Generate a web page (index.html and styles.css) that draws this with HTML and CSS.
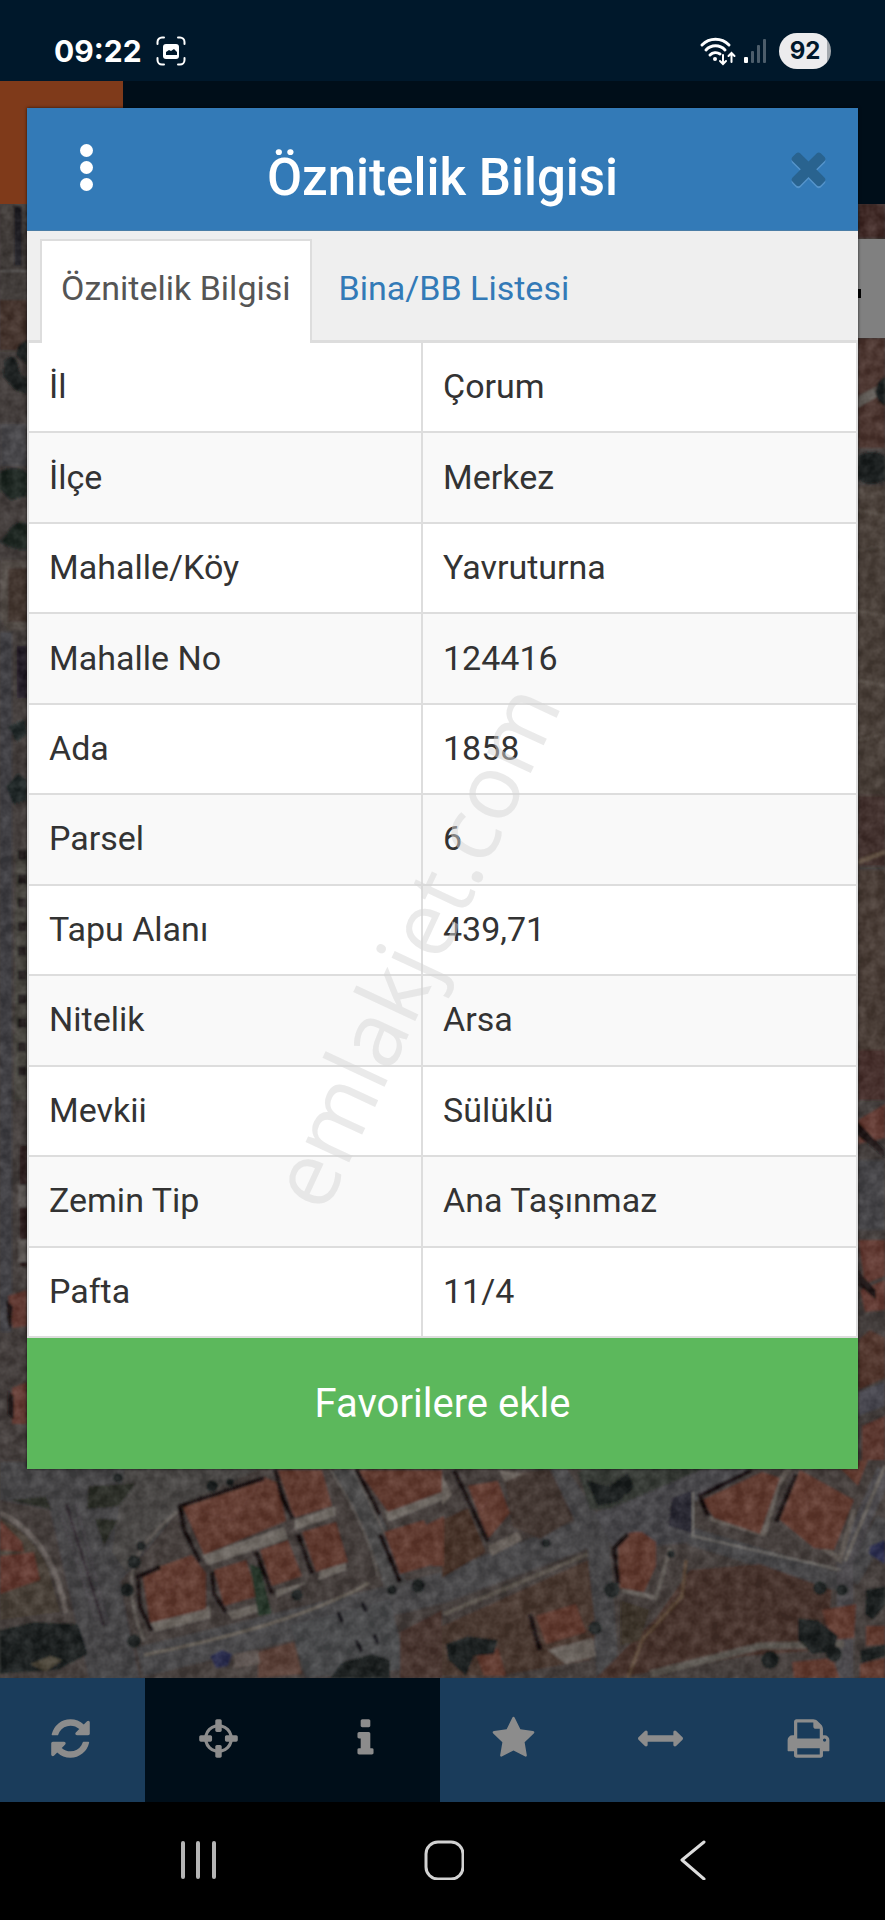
FILE: index.html
```html
<!DOCTYPE html>
<html lang="tr">
<head>
  <meta charset="UTF-8">
  <meta name="viewport" content="width=device-width, initial-scale=1">
  <title>Öznitelik Bilgisi</title>
  <link rel="stylesheet" href="styles.css">
</head>
<body>

<div class="status-bar">
  <div class="status-left">
    <span class="clock">09:22</span>
    <svg class="capture-icon" viewBox="0 0 30 30" fill="none" stroke="#fff" stroke-width="2" stroke-linecap="round">
      <path d="M1.500 8V6a4.500 4.500 0 0 1 4.500-4.500h2M22 1.500h2A4.500 4.500 0 0 1 28.500 6v2M28.500 22v2a4.500 4.500 0 0 1-4.500 4.500h-2M8 28.500H6A4.500 4.500 0 0 1 1.500 24v-2"/>
      <rect x="7" y="8" width="16" height="15" rx="3" fill="#fff" stroke="none"/>
      <path d="M10 19v-3l3-2 2 1 3-2 3 3v3z" fill="#00182b" stroke="none"/>
    </svg>
  </div>
  <div class="status-right">
    <svg class="wifi-icon" viewBox="0 0 38 30" fill="none" stroke="#fff" stroke-width="3" stroke-linecap="round">
      <path d="M4 9a19 19 0 0 1 27 0M8 14a13 13 0 0 1 19 0M12 19a8 8 0 0 1 10-1"/>
      <circle cx="17" cy="23" r="2" fill="#fff" stroke="none"/>
      <path d="M25 19v8M22 25l3 3 3-3M33.500 26v-8M30.500 20l3-3 3 3" stroke-width="2"/>
    </svg>
    <svg class="signal-icon" viewBox="0 0 23 25">
      <rect x="0" y="19" width="4" height="6" rx="1" fill="#fff"/>
      <rect x="7" y="13" width="3" height="12" rx="1" fill="#4c5d6b"/>
      <rect x="13" y="7" width="3" height="18" rx="1" fill="#4c5d6b"/>
      <rect x="19" y="1" width="3" height="24" rx="1" fill="#4c5d6b"/>
    </svg>
    <span class="battery">92</span>
  </div>
</div>

<main class="screen">
  <div class="app-header"><div class="app-logo"></div></div>

  <div class="map">
    <svg class="map-image" viewBox="0 204 885 1474" preserveAspectRatio="xMidYMax slice">
      <defs>
        <filter id="grain" x="0" y="0" width="100%" height="100%" color-interpolation-filters="sRGB">
          <feTurbulence type="fractalNoise" baseFrequency="0.09" numOctaves="3" seed="4"/>
          <feColorMatrix values="1 0 0 0 -0.24  1 0 0 0 -0.26  1 0 0 0 -0.26  0 0 0 0 0.2"/>
        </filter>
        <filter id="soft"><feGaussianBlur stdDeviation="1"/></filter>
      </defs>
      <rect x="0" y="204" width="885" height="1474" fill="#453f3d"/>
      <g filter="url(#soft)">
        <!-- left edge -->
        <rect x="0" y="204" width="27" height="120" fill="#403b38"/>
        <rect x="14" y="206" width="8" height="60" fill="#15131b"/>
        <path d="M0 270h27v2H0z" fill="#666460"/>
        <rect x="0" y="300" width="27" height="50" fill="#453029"/>
        <path d="M4 362q10-12 14 4t9 10v18l-12-4-12-14zM27 340q-12 4-10 16l10 8z" fill="#161e1c"/>
        <rect x="0" y="424" width="27" height="42" fill="#4a4a4d"/>
        <path d="M0 472q14-8 27 0v24l-16 4-11-10zM6 536q8-18 21-12v26q-16 0-27-8z" fill="#14201f"/>
        <path d="M0 560h27v70H8q-8-8-8-18z" fill="#56504a"/>
        <rect x="8" y="568" width="19" height="54" fill="#413029"/>
        <rect x="17" y="646" width="10" height="52" fill="#1d1624"/>
        <rect x="0" y="632" width="12" height="700" fill="#3f3f45"/>
        <path d="M8 726l16-6 3 14-10 8zM6 786l12-12 9 6v20l-14 4z" fill="#1b2827"/>
        <path d="M16 850h11v250H14z" fill="#4c4a42"/>
        <path d="M22 850v240" stroke="#211f1d" stroke-width="9" stroke-dasharray="10 14"/>
        <path d="M20 1146h7v120h-7z" fill="#271517"/>
        <path d="M18 1185h9v22h-9zM18 1240h9v22h-9z" fill="#65605d"/>
        <path d="M8 1296l19-6v36l-14 2zM12 1388l15-6v42H12z" fill="#6b3b31"/>
        <path d="M6 1300l7 6-2 24-4-8zM8 1390l6 6v24l-6-6z" fill="#190f11"/>
        <!-- right edge -->
        <rect x="858" y="204" width="27" height="34" fill="#412521"/>
        <rect x="858" y="338" width="27" height="110" fill="#50342d"/>
        <path d="M858 396l27-14v10l-27 16z" fill="#68635d"/>
        <path d="M858 456q14-8 27 0v24q-14 8-27 0zM878 382l7-6v30q-8-4-10-14z" fill="#161b1b"/>
        <rect x="858" y="486" width="27" height="310" fill="#4c4138"/>
        <path d="M858 510l27 6M858 550l27-4M858 610l27 6M858 680l27 6M858 740l27-6" stroke="#5b5148" stroke-width="3"/>
        <rect x="858" y="796" width="27" height="70" fill="#432f29"/>
        <path d="M858 862l27-10" stroke="#6b5847" stroke-width="4"/>
        <rect x="858" y="870" width="27" height="180" fill="#4b3e35"/>
        <rect x="858" y="1050" width="27" height="50" fill="#4a2e29"/>
        <path d="M858 1120l27-16v34l-27 6zM858 1240h27v36l-20 8zM860 1290l25-10v30l-20 2z" fill="#6b3b31"/>
        <path d="M858 1122l27 28v8l-27-22zM858 1270l18 20v10l-18-16z" fill="#130d0e"/>
        <path d="M858 1160h27v70h-27z" fill="#47474b"/>
        <path d="M858 1340l12-10 15 8v40l-27 12z" fill="#54352c"/>
        <path d="M858 1392l27-10v24l-27 10z" fill="#484a52"/>
        <path d="M862 1426l23-10v44l-23 4z" fill="#63372d"/>

        <!-- ground and streets -->
        <rect x="0" y="1460" width="885" height="218" fill="#46403d"/>
        <path d="M0 1462h180l-10 60-50 60 20 100H90L50 1510 0 1500z" fill="#47464a"/>
        <path d="M126 1462h150l-90 40-60 70-14-20z" fill="#4b4946"/>
        <path d="M88 1486l48-3-18 24-31 2zM94 1518l24 2-14 26zM8 1500l38-4 6 14z" fill="#2b2d28"/>
        <path d="M66 1504l38 122" stroke="#302a30" stroke-width="3"/>
        <path d="M76 1504l32 120M60 1510l36 110" stroke="#58545a" stroke-width="1"/>
        <path d="M0 1513q52 24 66 100" fill="none" stroke="#6f6864" stroke-width="5"/>
        <path d="M0 1518q30 14 48 50l12 44-60 8z" fill="#4b4339"/>
        <path d="M0 1520l22 22 2 10-24-2zM0 1556l34-4 6 28-40 14z" fill="#68392e"/>
        <path d="M0 1630l34-8 44 2 10 30-30 16-58 4z" fill="#141f1e"/>
        <path d="M30 1664l20-8 12 4-16 12z" fill="#4d4639"/>
        <path d="M180 1510q-45 34-48 65t12 66" fill="none" stroke="#69645f" stroke-width="3"/>
        <path d="M140 1662l302-74 145-55 144-66" fill="none" stroke="#4b4b4e" stroke-width="30"/>
        <path d="M144 1655q150-30 225-72" fill="none" stroke="#716a60" stroke-width="3"/>
        <path d="M444 1614l144-60" fill="none" stroke="#665f56" stroke-width="4"/>
        <path d="M340 1466q40 60 56 122" fill="none" stroke="#4e4d4e" stroke-width="22"/>
        <path d="M328 1466q40 60 50 110M352 1466l34 70" fill="none" stroke="#68645f" stroke-width="2"/>
        <path d="M290 1625l100-26 16 70-100 9z" fill="#4c4d50"/>
        <path d="M552 1466l46 70 10 142" fill="none" stroke="#48484b" stroke-width="22"/>
        <path d="M594 1514l100-46h60l-60 34v40l-80 8z" fill="#4a484d"/>
        <path d="M690 1536l150 46M850 1580l35-60" stroke="#48484b" stroke-width="18"/>
        <path d="M885 1470l-40 92v116" fill="none" stroke="#515052" stroke-width="16"/>
        <path d="M885 1466l-40 95" stroke="#756f69" stroke-width="3"/>

        <!-- empty lots -->
        <path d="M504 1474l46-5 24 50-34 20-28-12z" fill="#453732"/>
        <path d="M442 1520l26-12 18 44-44 26z" fill="#493327"/>
        <path d="M442 1626l146-66 8 70-6 30-90 16h-58z" fill="#4c382f"/>
        <path d="M690 1570l70-6 72 26-6 60-80 6-130 22h-20l60-60z" fill="#493229"/>
        <path d="M686 1560l-4 36-40 44-14 38" fill="none" stroke="#67513d" stroke-width="3"/>
        <path d="M650 1674l110-28 84-2" fill="none" stroke="#615b54" stroke-width="7"/>
        <path d="M620 1600l30 10-10 30-20 6z" fill="#3b3328"/>
        <path d="M400 1632l42-22v68h-42z" fill="#4b352f"/>
        <path d="M258 1652l36-10 8 32-44 4z" fill="#614237"/>
        <path d="M234 1654l24-4 2 14-26 4z" fill="#6b605b"/>
        <path d="M594 1462l-16 10 12 38 20-1 110-47z" fill="#363a35"/>
        <path d="M692 1490l2 44-12-4-14-4 4-28z" fill="#252530"/>
        <path d="M693 1492v44l148 34" fill="none" stroke="#77746f" stroke-width="2"/>

        <!-- courtyards -->
        <path d="M202 1555l82-28 4 12-80 26zM295 1520l40-14v10l-40 14zM150 1622l60-16v12l-56 14zM385 1510l58-24v14l-55 22z" fill="#77716b"/>
        <path d="M228 1612l30-8v8l-26 8zM276 1590l32-8-32 16zM320 1570l26-8v8l-28 10z" fill="#77716b"/>
        <path d="M548 1650l44-12 4 18-30 8zM488 1546l30-14 4 8-30 16zM452 1495l-10 10v-30zM500 1470l24 4-20 8z" fill="#736c65"/>
        <path d="M710 1518l54 16 14-50 14-20M800 1530l40 30 14-50" fill="none" stroke="#6b645d" stroke-width="5"/>
        <path d="M622 1590l34 8 14-50" fill="none" stroke="#6b655f" stroke-width="4"/>

        <!-- roofs -->
        <g fill="#683a2f">
          <path d="M182 1505l82-28 14 6 8 38-82 34z"/>
          <path d="M278 1470h44l10 36-38 12z"/>
          <path d="M358 1470h84v22l-54 20z"/>
          <path d="M142 1573l50-18 14 18v36l-56 14z"/>
          <path d="M214 1570l32-10 12 36-34 10z"/>
          <path d="M260 1550l28-10 14 36-30 10z"/>
          <path d="M302 1532l34-10 12 40-32 10z"/>
          <path d="M384 1532l40-12 18 42-42 12z"/>
          <path d="M424 1526l20-10v50h-12z"/>
          <path d="M468 1486l30-5 12 32-22 26z"/>
          <path d="M618 1546q4-16 24-14l14 10v24l-12 26-24-4z"/>
          <path d="M702 1500l60-28 18 6-20 56-46-16z"/>
          <path d="M780 1520l20-50 54 30-20 50-20-2z"/>
          <path d="M536 1616l40-12 10 28-40 12z"/>
          <path d="M476 1654l22-6 8 28h-22z"/>
          <path d="M822 1610l34-6-2 34-22 2z"/>
          <path d="M866 1626h19v18l-19 2zM792 1662l40-4 8 20h-46zM860 1664l25-6v20h-25zM834 1462l34-2-10 26z"/>
        </g>
        <path d="M182 1505l82-28-30 44zM142 1573l50-18-22 40zM468 1486l30-5-16 30zM780 1520l20-50 10 40z" fill="#75473a" opacity="0.600"/>

        <!-- shadows -->
        <g fill="none" stroke="#140d11" stroke-width="5">
          <path d="M264 1478l-84 28 4 24 16 32"/>
          <path d="M275 1469l8 30 10 20"/>
          <path d="M356 1469l24 46"/>
          <path d="M160 1567l-22 10 2 30 12 24"/>
          <path d="M212 1572l2 22 12 18"/>
          <path d="M256 1552l16 42"/>
          <path d="M298 1534l14 40"/>
          <path d="M380 1534l20 48"/>
          <path d="M454 1470l34 72"/>
          <path d="M628 1534l-14 14 4 36"/>
          <path d="M752 1470l-52 26 8 20M796 1474l-20 48"/>
          <path d="M530 1614l10 36"/>
        </g>

        <!-- trees and cars -->
        <g fill="#141d1b">
          <path d="M250 1564l10 4 12 46-14 2z" fill="#243527"/>
          <circle cx="134" cy="1562" r="7"/><circle cx="127" cy="1590" r="7"/><circle cx="141" cy="1546" r="5"/><circle cx="134" cy="1641" r="7"/>
          <circle cx="212" cy="1486" r="6"/><circle cx="230" cy="1482" r="4"/><circle cx="118" cy="1478" r="5"/>
          <path d="M330 1678l12-16 30-8 18 6v18z"/>
          <circle cx="392" cy="1590" r="5"/><circle cx="418" cy="1586" r="7"/><circle cx="297" cy="1595" r="6"/>
          <path d="M586 1480l24 6 18-14 6 16-16 14-20 4z"/>
          <circle cx="612" cy="1590" r="8"/><circle cx="595" cy="1628" r="7"/>
          <path d="M446 1644l22-8 30 4-4 14-20 2-8 20-18-16z"/>
          <circle cx="546" cy="1543" r="5"/><circle cx="671" cy="1554" r="4"/><circle cx="820" cy="1588" r="7"/>
          <path d="M798 1618l20 2 20 16-4 16-22 2-14-14zM866 1590l19-4v20l-12 14-8-6z"/>
          <circle cx="842" cy="1590" r="6"/><circle cx="770" cy="1660" r="9"/><circle cx="834" cy="1654" r="8"/>
          <path d="M860 1650l25-6v12l-24 8z"/>
          <path d="M356 1640l6 12M374 1634l4 10M338 1612l4 10M362 1602l4 10" stroke="#17181c" stroke-width="4"/>
        </g>
        <path d="M210 1656l12-6 10 4-4 12-12 2zM870 1546l15-6v24l-16-10z" fill="#272c51"/>
      </g>
      <rect x="0" y="204" width="885" height="1474" filter="url(#grain)"/>
    </svg>
    <div class="map-tool"></div>
  </div>

  <section class="modal">
    <header class="modal-header">
      <button class="menu-btn" aria-label="Menü"><span></span><span></span><span></span></button>
      <h1>Öznitelik Bilgisi</h1>
      <button class="close-btn" aria-label="Kapat">
        <svg viewBox="0 0 1792 1792"><path d="M1490 1322q0 40-28 68l-136 136q-28 28-68 28t-68-28l-294-294-294 294q-28 28-68 28t-68-28l-136-136q-28-28-28-68t28-68l294-294-294-294q-28-28-28-68t28-68l136-136q28-28 68-28t68 28l294 294 294-294q28-28 68-28t68 28l136 136q28 28 28 68t-28 68l-294 294 294 294q28 28 28 68z"/></svg>
      </button>
    </header>

    <nav class="tabs">
      <a class="tab active" href="#oznitelik">Öznitelik Bilgisi</a>
      <a class="tab" href="#bina">Bina/BB Listesi</a>
    </nav>

    <table class="info-table" id="oznitelik">
      <tbody>
        <tr><th scope="row">İl</th><td>Çorum</td></tr>
        <tr><th scope="row">İlçe</th><td>Merkez</td></tr>
        <tr><th scope="row">Mahalle/Köy</th><td>Yavruturna</td></tr>
        <tr><th scope="row">Mahalle No</th><td>124416</td></tr>
        <tr><th scope="row">Ada</th><td>1858</td></tr>
        <tr><th scope="row">Parsel</th><td>6</td></tr>
        <tr><th scope="row">Tapu Alanı</th><td>439,71</td></tr>
        <tr><th scope="row">Nitelik</th><td>Arsa</td></tr>
        <tr><th scope="row">Mevkii</th><td>Sülüklü</td></tr>
        <tr><th scope="row">Zemin Tip</th><td>Ana Taşınmaz</td></tr>
        <tr><th scope="row">Pafta</th><td>11/4</td></tr>
      </tbody>
    </table>

    <button class="favorite-btn">Favorilere ekle</button>
  </section>
</main>

<div class="toolbar">
  <button class="tool" aria-label="Yenile">
    <svg viewBox="0 0 1792 1792"><path d="M1639 1056q0 5-1 7-64 268-268 434.500t-478 166.500q-146 0-282.500-55t-243.500-157l-129 129q-19 19-45 19t-45-19-19-45v-448q0-26 19-45t45-19h448q26 0 45 19t19 45-19 45l-137 137q71 66 161 102t187 36q134 0 250-65t186-179q11-17 53-117 8-23 30-23h192q13 0 22.500 9.500t9.500 22.500zm25-800v448q0 26-19 45t-45 19h-448q-26 0-45-19t-19-45 19-45l138-138q-148-137-349-137-134 0-250 65t-186 179q-11 17-53 117-8 23-30 23h-199q-13 0-22.500-9.500t-9.500-22.500v-7q65-268 270-434.500t480-166.500q146 0 284 55.500t245 156.500l130-129q19-19 45-19t45 19 19 45z"/></svg>
  </button>
  <button class="tool selected" aria-label="Konum">
    <svg viewBox="0 0 1792 1792"><path d="M1325 1024h-109q-26 0-45-19t-19-45v-128q0-26 19-45t45-19h109q-32-108-112.500-188.500t-188.500-112.500v109q0 26-19 45t-45 19h-128q-26 0-45-19t-19-45v-109q-108 32-188.500 112.500t-112.500 188.500h109q26 0 45 19t19 45v128q0 26-19 45t-45 19h-109q32 108 112.500 188.500t188.500 112.500v-109q0-26 19-45t45-19h128q26 0 45 19t19 45v109q108-32 188.500-112.500t112.500-188.500zm339-192v128q0 26-19 45t-45 19h-143q-37 161-154.500 278.500t-278.500 154.500v143q0 26-19 45t-45 19h-128q-26 0-45-19t-19-45v-143q-161-37-278.500-154.500t-154.500-278.500h-143q-26 0-45-19t-19-45v-128q0-26 19-45t45-19h143q37-161 154.500-278.500t278.500-154.500v-143q0-26 19-45t45-19h128q26 0 45 19t19 45v143q161 37 278.500 154.500t154.500 278.500h143q26 0 45 19t19 45z"/></svg>
  </button>
  <button class="tool selected" aria-label="Bilgi">
    <svg viewBox="0 0 1792 1792"><path d="M1216 1344v128q0 26-19 45t-45 19h-512q-26 0-45-19t-19-45v-128q0-26 19-45t45-19h64v-384h-64q-26 0-45-19t-19-45v-128q0-26 19-45t45-19h384q26 0 45 19t19 45v576h64q26 0 45 19t19 45zm-128-1152v192q0 26-19 45t-45 19h-256q-26 0-45-19t-19-45v-192q0-26 19-45t45-19h256q26 0 45 19t19 45z"/></svg>
  </button>
  <button class="tool" aria-label="Favoriler">
    <svg viewBox="0 0 1792 1792"><path d="M1728 647q0 22-26 48l-363 354 86 500q1 7 1 20 0 21-10.500 35.500t-30.500 14.500q-19 0-40-12l-449-236-449 236q-22 12-40 12-21 0-31.500-14.500t-10.500-35.500q0-6 2-20l86-500-364-354q-25-27-25-48 0-37 56-46l502-73 225-455q19-41 49-41t49 41l225 455 502 73q56 9 56 46z"/></svg>
  </button>
  <button class="tool" aria-label="Ölçüm">
    <svg viewBox="0 0 1792 1792"><path d="M1792 896q0 26-19 45l-256 256q-19 19-45 19t-45-19-19-45v-128h-1024v128q0 26-19 45t-45 19-45-19l-256-256q-19-19-19-45t19-45l256-256q19-19 45-19t45 19 19 45v128h1024v-128q0-26 19-45t45-19 45 19l256 256q19 19 19 45z"/></svg>
  </button>
  <button class="tool" aria-label="Yazdır">
    <svg viewBox="0 0 1792 1792"><path d="M448 1536h896v-256h-896v256zm0-640h896v-384h-160q-40 0-68-28t-28-68v-160h-640v640zm1152 64q0-26-19-45t-45-19-45 19-19 45 19 45 45 19 45-19 19-45zm128 0v416q0 13-9.500 22.500t-22.500 9.500h-224v160q0 40-28 68t-68 28h-960q-40 0-68-28t-28-68v-160h-224q-13 0-22.500-9.500t-9.500-22.500v-416q0-79 56.500-135.500t135.500-56.500h64v-544q0-40 28-68t68-28h672q40 0 88 20t76 48l152 152q28 28 48 76t20 88v256h64q79 0 135.500 56.500t56.500 135.500z"/></svg>
  </button>
</div>

<div class="system-nav">
  <button aria-label="Son uygulamalar">
    <svg viewBox="0 0 40 40" fill="none" stroke="#b5b5b5" stroke-width="4" stroke-linecap="round"><path d="M4 3v34M19 3v34M35 3v34"/></svg>
  </button>
  <button aria-label="Ana ekran">
    <svg viewBox="0 0 40 40" fill="none" stroke="#d2d2d2" stroke-width="3"><rect x="2" y="2" width="37" height="37" rx="12"/></svg>
  </button>
  <button aria-label="Geri">
    <svg viewBox="0 0 40 40" fill="none" stroke="#dcdcdc" stroke-width="3" stroke-linecap="round" stroke-linejoin="round"><path d="M34 2L12 20l22 19"/></svg>
  </button>
</div>

<div class="watermark">emlakjet.com</div>

</body>
</html>
```
FILE: styles.css
```css
:root {
  --status-bg: #00182b;
  --dark-bg: #000e19;
  --header-bg: #337ab7;
  --toolbar-bg: #1a3c5b;
  --icon-color: #8c8c8c;
  --border-color: #dddddd;
  --success: #5cb85c;
}

* {
  box-sizing: border-box;
}

body {
  margin: 0;
  min-height: 100vh;
  display: flex;
  flex-direction: column;
  position: relative;
  font-family: Roboto, sans-serif;
  color: #333;
  background: #000;
}

button {
  border: none;
  padding: 0;
  background: none;
  font-family: inherit;
  cursor: pointer;
}

svg {
  display: block;
}

/* status bar */
.status-bar {
  height: 81px;
  padding: 20px 54px 0;
  display: flex;
  justify-content: space-between;
  align-items: center;
  background: var(--status-bg);
  color: #fff;
}

.status-left, .status-right {
  display: flex;
  align-items: center;
}

.status-left {
  gap: 14px;
}

.status-right {
  gap: 8px;
}

.clock {
  font-family: Inter, sans-serif;
  font-size: 30px;
  font-weight: 700;
}

.capture-icon {
  width: 30px;
  height: 30px;
}

.wifi-icon {
  width: 38px;
  height: 30px;
}

.signal-icon {
  width: 23px;
  height: 25px;
}

.battery {
  width: 52px;
  height: 36px;
  margin-left: 4px;
  border-radius: 18px;
  background: linear-gradient(90deg, #ececee 92%, #a4a9ae 92%);
  color: #00182b;
  font-family: Inter, sans-serif;
  font-size: 24px;
  font-weight: 700;
  line-height: 36px;
  text-align: center;
}

/* map page under the dialog */
.screen {
  flex: 1;
  display: flex;
  flex-direction: column;
  position: relative;
}

.app-header {
  height: 123px;
  background: var(--dark-bg);
}

.app-logo {
  width: 123px;
  height: 123px;
  background: #7f3a1a;
}

.map {
  flex: 1;
  position: relative;
  min-height: 1390px;
}

.map-image {
  position: absolute;
  width: 100%;
  height: 100%;
}

.map-tool {
  position: absolute;
  top: 35px;
  right: 0;
  width: 27px;
  height: 99px;
  background: #808080;
}

.map-tool::before {
  content: "";
  position: absolute;
  top: 50px;
  left: 0;
  width: 3px;
  height: 9px;
  background: #000;
}

/* dialog */
.modal {
  position: absolute;
  top: 27px;
  left: 27px;
  right: 27px;
  background: #fff;
  box-shadow: 0 0 3px rgba(0, 0, 0, 0.7);
}

.modal-header {
  height: 123px;
  padding-bottom: 4px;
  display: grid;
  grid-template-columns: 118px 1fr 118px;
  align-items: center;
  justify-items: center;
  background: var(--header-bg);
  border-bottom: 1px solid #4a7da6;
}

.modal-header h1 {
  margin: 22px 0 0;
  color: #fff;
  font-size: 51px;
  font-weight: 500;
  line-height: 60px;
}

.menu-btn {
  display: grid;
  gap: 4px;
}

.menu-btn span {
  width: 13px;
  height: 13px;
  border-radius: 50%;
  background: #fff;
}

.close-btn {
  margin-left: 18px;
}

.close-btn svg {
  width: 51px;
  height: 51px;
  fill: #29638f;
  filter: drop-shadow(0 2px 0 #5594cb);
}

.tabs {
  height: 112px;
  padding: 8px 13px 0;
  display: flex;
  background: #efefef;
  border-bottom: 3px solid var(--border-color);
}

.tab {
  margin-right: 6px;
  margin-bottom: -3px;
  padding: 0 19px;
  border: 2px solid transparent;
  border-bottom: none;
  color: var(--header-bg);
  font-size: 34px;
  line-height: 94px;
  text-decoration: none;
}

.tab.active {
  background: #fff;
  border-color: var(--border-color);
  color: #555;
}

.info-table {
  width: 100%;
  height: 995px;
  border-collapse: collapse;
  border: 2px solid var(--border-color);
  border-top: none;
  font-size: 34px;
  line-height: 48px;
}

.info-table th, .info-table td {
  padding: 18px 20px 20px;
  border: 2px solid var(--border-color);
  border-top: none;
  font-weight: 400;
  text-align: left;
}

.info-table th {
  width: 394px;
}

.info-table tr:nth-child(even) {
  background: #f9f9f9;
}

.favorite-btn {
  display: block;
  width: 100%;
  height: 131px;
  background: var(--success);
  color: #fff;
  font-size: 40px;
}

/* bottom bars */
.toolbar {
  height: 124px;
  margin-left: -3px;
  padding-right: 3px;
  display: flex;
  background: var(--toolbar-bg);
}

.tool {
  flex: 1;
  padding-bottom: 4px;
  display: flex;
  justify-content: center;
  align-items: center;
}

.tool.selected {
  background: var(--dark-bg);
}

.tool svg {
  width: 45px;
  height: 45px;
  fill: var(--icon-color);
}

.system-nav {
  height: 118px;
  padding: 0 72px 2px 76px;
  display: grid;
  grid-template-columns: repeat(3, 1fr);
  align-items: center;
  justify-items: center;
}

.system-nav svg {
  width: 40px;
  height: 40px;
}

.watermark {
  position: absolute;
  top: 945px;
  left: 412px;
  transform: translate(-50%, -50%) rotate(-65deg);
  color: rgba(214, 214, 214, 0.5);
  font-family: "Open Sans", sans-serif;
  font-size: 90px;
  line-height: 100px;
  pointer-events: none;
}
```
